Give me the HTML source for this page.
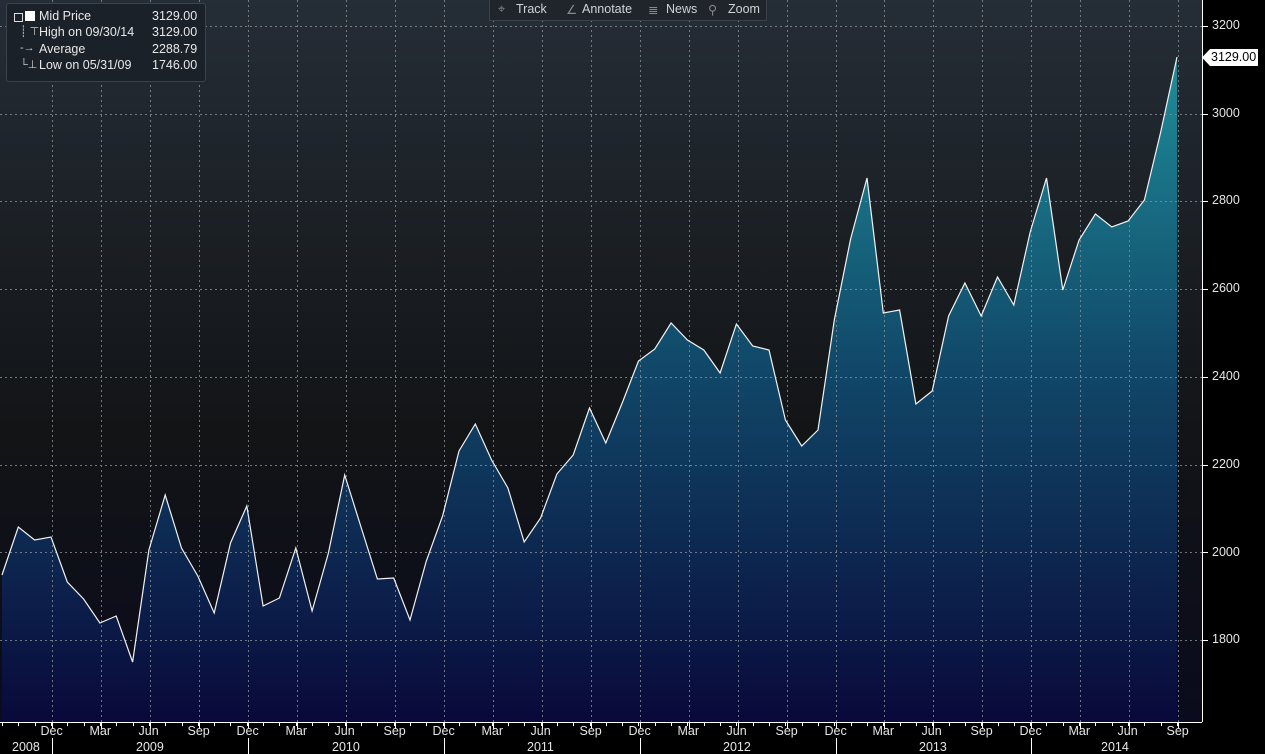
<!DOCTYPE html>
<html><head><meta charset="utf-8"><style>
body{margin:0;width:1265px;height:754px;overflow:hidden;background:#000;font-family:"Liberation Sans",sans-serif;}
svg{position:absolute;left:0;top:0}
.lg{position:absolute;left:6px;top:3px;width:198px;height:77px;background:#1b2128;border:1px solid #3b4249;border-radius:3px;color:#e8e8e8;font-size:12.5px;}
.lg div{position:absolute;white-space:nowrap}
.tb{position:absolute;left:489px;top:0;width:276px;height:20px;background:#1f252b;border:1px solid #3a4148;border-top:none;color:#cfd3d6;font-size:12.5px;}
.tb span{position:absolute;top:2px;white-space:nowrap}
.ax{position:absolute;color:#e6e6e6;font-size:12.5px;white-space:nowrap}
</style></head><body>
<svg width="1265" height="754" id="s">
<defs>
<linearGradient id="bg" x1="0" y1="0" x2="0" y2="1">
<stop offset="0" stop-color="#252d36"/><stop offset="0.6" stop-color="#121416"/><stop offset="1" stop-color="#0a0b1c"/></linearGradient>
<linearGradient id="fl" x1="0" y1="57" x2="0" y2="722" gradientUnits="userSpaceOnUse">
<stop offset="0" stop-color="#1f8d9a"/><stop offset="0.45" stop-color="#114a6a"/><stop offset="1" stop-color="#09093a"/></linearGradient>
</defs>
<rect x="0" y="0" width="1202" height="722" fill="url(#bg)"/>
<path id="area" fill="url(#fl)"/>
<g id="grid" stroke="#8a8f95" stroke-dasharray="2,3" stroke-width="1" opacity="0.8"></g>
<polyline id="ln" fill="none" stroke="#f2f2f2" stroke-width="1.2"/>
<line x1="1202.5" y1="0" x2="1202.5" y2="722" stroke="#fff"/>
<line x1="0" y1="722.5" x2="1202" y2="722.5" stroke="#fff"/>
<g id="ticks" stroke="#fff"></g>
<path d="M1202 57.5 L1210 49 H1258 V66 H1210 Z" fill="#fff"/>
</svg>
<div class="ax" style="left:1211px;top:50px;color:#000">3129.00</div>
<div class="ax" style="left:1212px;top:18px">3200</div>
<div class="ax" style="left:1212px;top:106px">3000</div>
<div class="ax" style="left:1212px;top:193px">2800</div>
<div class="ax" style="left:1212px;top:281px">2600</div>
<div class="ax" style="left:1212px;top:369px">2400</div>
<div class="ax" style="left:1212px;top:457px">2200</div>
<div class="ax" style="left:1212px;top:545px">2000</div>
<div class="ax" style="left:1212px;top:632px">1800</div>
<div id="months"></div>
<div class="ax" style="left:12px;top:740px">2008</div>
<div class="ax" style="left:136px;top:740px">2009</div>
<div class="ax" style="left:332px;top:740px">2010</div>
<div class="ax" style="left:527px;top:740px">2011</div>
<div class="ax" style="left:723px;top:740px">2012</div>
<div class="ax" style="left:919px;top:740px">2013</div>
<div class="ax" style="left:1101px;top:740px">2014</div>
<div class="lg">
<div style="left:7px;top:9px;width:7px;height:7px;border:1px solid #ddd;"></div>
<div style="left:18px;top:7px;width:10px;height:10px;background:#fff"></div>
<div style="left:32px;top:5px">Mid Price</div><div style="left:145px;top:5px">3129.00</div>
<div style="left:13px;top:21px;color:#ccc;font-size:11px">┊ ⊤</div>
<div style="left:32px;top:21px">High on 09/30/14</div><div style="left:145px;top:21px">3129.00</div>
<div style="left:13px;top:38px;color:#ccc;font-size:11px">-→</div>
<div style="left:32px;top:38px">Average</div><div style="left:145px;top:38px">2288.79</div>
<div style="left:13px;top:54px;color:#ccc;font-size:11px">└⊥</div>
<div style="left:32px;top:54px">Low on 05/31/09</div><div style="left:145px;top:54px">1746.00</div>
</div>
<div class="tb">
<span style="left:8px;color:#888">⌖</span><span style="left:26px">Track</span>
<span style="left:76px;color:#888">∠</span><span style="left:92px">Annotate</span>
<span style="left:158px;color:#888">≣</span><span style="left:176px">News</span>
<span style="left:218px;color:#888">⚲</span><span style="left:238px">Zoom</span>
</div>
<script>
var ys=[575,527,540,537,582,599,623,616,662,550,495,548,576,613,543,506,606,598,548,611,553,475,527,579,578,620,561,516,451,424,460,488,542,518,474,455,408,443,403,361,349,323,340,350,373,324,346,350,420,446,430,320,239,178,313,310,404,391,316,283,316,277,305,232,178,290,240,214,227,221,200,132,57];
var pts=ys.map(function(y,i){return (2+i*16.32).toFixed(1)+","+y;});
document.getElementById('ln').setAttribute('points',pts.join(' '));
document.getElementById('area').setAttribute('d','M2,722 L'+pts.join(' L')+' L'+(2+72*16.32).toFixed(1)+',722 Z');
var g=document.getElementById('grid'),ns='http://www.w3.org/2000/svg',t=document.getElementById('ticks');
function L(p,a,b,c,d){var l=document.createElementNS(ns,'line');l.setAttribute('x1',a);l.setAttribute('y1',b);l.setAttribute('x2',c);l.setAttribute('y2',d);p.appendChild(l);}
for(var v=3200;v>=1800;v-=200){var y=Math.round(26+(3200-v)*0.4386)+0.5;L(g,0,y,1202,y);L(t,1202,y,1208,y);}
var mn=['Dec','Mar','Jun','Sep'],h='';
for(var q=0;q<24;q++){var x=Math.round(52+q*48.97)+0.5;L(g,x,0,x,722);L(t,x,722,x,729);
h+='<div class="ax" style="left:'+(x-12)+'px;top:724px">'+mn[q%4]+'</div>';
if(q%4==0)L(t,x,738,x,754);}
for(var m=0;m<73;m++){var x=Math.round(2+m*16.32)+0.5;L(t,x,722,x,726);}
document.getElementById('months').innerHTML=h;
</script>
</body></html>
